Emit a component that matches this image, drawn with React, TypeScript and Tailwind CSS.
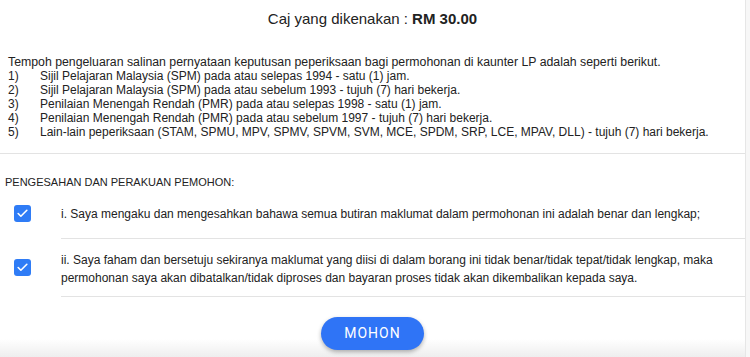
import { Check } from 'lucide-react';

const items = [
  'Sijil Pelajaran Malaysia (SPM) pada atau selepas 1994 - satu (1) jam.',
  'Sijil Pelajaran Malaysia (SPM) pada atau sebelum 1993 - tujuh (7) hari bekerja.',
  'Penilaian Menengah Rendah (PMR) pada atau selepas 1998 - satu (1) jam.',
  'Penilaian Menengah Rendah (PMR) pada atau sebelum 1997 - tujuh (7) hari bekerja.',
  'Lain-lain peperiksaan (STAM, SPMU, MPV, SPMV, SPVM, SVM, MCE, SPDM, SRP, LCE, MPAV, DLL) - tujuh (7) hari bekerja.',
];

function CheckBox() {
  return (
    <div className="w-[17px] h-[17px] rounded-[3px] bg-[#2f7cf6] flex items-center justify-center shrink-0">
      <Check className="w-[13px] h-[13px] text-white" strokeWidth={3} />
    </div>
  );
}

export default function App() {
  return (
    <div className="flex w-[750px] h-[357px] overflow-hidden bg-[#f7f7f7] font-['Liberation_Sans',Arial,sans-serif] text-[#222]">
      <div className="w-[746px] bg-white border-r border-[#e6e6e6] flex flex-col relative">
        <div className="text-center text-[15px] pt-[8px] h-[55px]">
          Caj yang dikenakan : <span className="font-bold">RM 30.00</span>
        </div>

        <div className="pl-[8px] text-[12px] leading-[14px] pb-[14px] border-b border-[#e3e3e3]">
          <p className="text-[12.3px]">
            Tempoh pengeluaran salinan pernyataan keputusan peperiksaan bagi permohonan di kaunter LP adalah seperti berikut.
          </p>
          {items.map((t, i) => (
            <div key={i} className="flex">
              <span className="w-[32px] shrink-0">{i + 1})</span>
              <span>{t}</span>
            </div>
          ))}
        </div>

        <div className="pl-[5px] pt-[20px] text-[11px] uppercase text-[#222]">
          Pengesahan dan Perakuan Pemohon:
        </div>

        <div className="flex mt-[12px]">
          <div className="w-[61px] pl-[14px] pt-[2px]">
            <CheckBox />
          </div>
          <div className="flex-1 text-[12px] leading-[18px] pt-[2px] pb-[15px] border-b border-[#e3e3e3]">
            i. Saya mengaku dan mengesahkan bahawa semua butiran maklumat dalam permohonan ini adalah benar dan lengkap;
          </div>
        </div>

        <div className="flex">
          <div className="w-[61px] pl-[14px] pt-[20px]">
            <CheckBox />
          </div>
          <div className="flex-1 text-[12px] leading-[18px] pt-[12px] pb-[9px] pr-[10px] border-b border-[#e3e3e3]">
            ii. Saya faham dan bersetuju sekiranya maklumat yang diisi di dalam borang ini tidak benar/tidak tepat/tidak lengkap, maka permohonan saya akan dibatalkan/tidak diproses dan bayaran proses tidak akan dikembalikan kepada saya.
          </div>
        </div>

        <div className="flex justify-center pt-[20px]">
          <button className="w-[103px] h-[33px] rounded-full bg-[#2f74f6] text-white text-[14px] font-normal font-['Roboto',sans-serif] tracking-[1px] shadow-[0_2px_4px_rgba(0,0,0,0.3)] z-10">
            MOHON
          </button>
        </div>

        <div className="absolute left-0 right-0 bottom-0 h-[18px] bg-gradient-to-b from-white to-[#eeeeee]" />
      </div>
    </div>
  );
}
